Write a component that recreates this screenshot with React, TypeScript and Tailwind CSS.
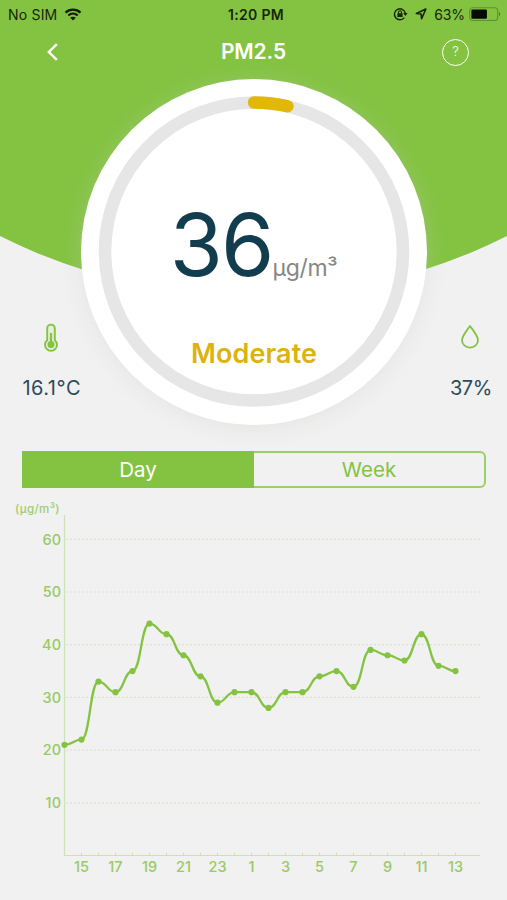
const readings = [
  21, 22, 33, 31, 35, 44, 42, 38, 34, 29, 31, 31,
  28, 31, 31, 34, 35, 32, 39, 38, 37, 42, 36, 35,
];

const hourLabels = ["15", "17", "19", "21", "23", "1", "3", "5", "7", "9", "11", "13"];
const gridValues = [60, 50, 40, 30, 20, 10];

const axisX = 64.5;
const axisY = 359.5;
const stepX = 17;
const unitY = 5.27;

const pointX = (i: number) => axisX + i * stepX;
const pointY = (value: number) => axisY - value * unitY;

const linePath = readings
  .map((value, i) => {
    const x = pointX(i);
    const y = pointY(value);
    if (i === 0) return `M${x} ${y}`;
    const mid = x - stepX / 2;
    return `C${mid} ${pointY(readings[i - 1])} ${mid} ${y} ${x} ${y}`;
  })
  .join(" ");

const StatusBar = () => (
  <div className="grid h-7 grid-cols-3 items-center pl-2 pr-1.5 text-[14px] text-[#16260a]">
    <div className="flex items-center gap-[7px]">
      <span className="tracking-[0.2px]">No SIM</span>
      <svg width="18" height="13" viewBox="0 0 17 13" fill="none" stroke="#101c06" strokeWidth="2.2">
        <path d="M1 4.6C5.2.6 11.8.6 16 4.6" />
        <path d="M3.8 7.5c2.7-2.4 6.7-2.4 9.4 0" />
        <path d="M8.5 12.4 5.7 9.7c1.6-1.4 4-1.4 5.6 0z" fill="#101c06" stroke="none" />
      </svg>
    </div>
    <div className="pl-[3px] text-center font-semibold tracking-[0.3px]">1:20 PM</div>
    <div className="flex items-center justify-end">
      <svg width="15" height="14" viewBox="0 0 15 14" fill="none" stroke="#16260a" strokeWidth="1.4">
        <path d="M11.3 10.6A5.5 5.5 0 1 1 12.3 6" />
        <path d="M10.2 6h4.4l-2.2 3z" fill="#16260a" stroke="none" />
        <rect x="4.4" y="6.2" width="5.2" height="3.9" rx=".5" fill="#16260a" stroke="none" />
        <path d="M5.5 6.4V5.2a1.5 1.5 0 0 1 3 0v1.2" strokeWidth="1.1" />
      </svg>
      <svg className="ml-[7px]" width="12" height="12" viewBox="0 0 12 12" fill="none" stroke="#16260a" strokeWidth="1.6" strokeLinejoin="round">
        <path d="M10.8 1.1 1.3 5.5l4.8.5.5 4.8z" />
      </svg>
      <span className="ml-[7px] tracking-[-0.1px]">63%</span>
      <svg className="ml-[4px]" width="32" height="15" viewBox="0 0 32 15">
        <rect x=".7" y=".7" width="28" height="12.8" rx="3" fill="none" stroke="#5f9030" strokeWidth="1.1" />
        <rect x="2.4" y="2.5" width="15.5" height="9.2" rx="1" fill="#050a02" />
        <path d="M30 5v4.2c1.6-.6 1.6-3.6 0-4.2z" fill="#4f7a25" />
      </svg>
    </div>
  </div>
);

const NavBar = () => (
  <div className="grid h-[51px] grid-cols-[1fr_auto_1fr] items-center pl-[46px] pr-[38px] pb-[3px] text-white">
    <svg width="28" height="20" viewBox="0 0 28 20" fill="none" stroke="white" strokeWidth="2.4">
      <path d="M10.8 2.2 2.8 10l8 7.8" />
    </svg>
    <h1 className="-ml-2 text-[21px] font-semibold tracking-[-0.1px]">PM2.5</h1>
    <div className="flex size-[27px] items-center justify-center justify-self-end rounded-full border-[1.5px] border-white text-[13px] font-light">
      ?
    </div>
  </div>
);

const Gauge = () => (
  <div className="relative size-[346px] shrink-0 rounded-full bg-white shadow-[0_3px_22px_rgba(200,205,197,0.33)]">
    <svg className="absolute inset-0" width="346" height="346" viewBox="0 0 346 346" fill="none">
      <circle cx="173" cy="172.5" r="149" stroke="#e6e6e6" strokeWidth="12.6" />
      <path d="M173 23.5A149 149 0 0 1 206.5 27.3" stroke="#e2b808" strokeWidth="12.4" strokeLinecap="round" />
    </svg>
    <div className="relative flex flex-col items-center pt-[123px]">
      <div className="mr-px flex items-baseline">
        <span className="text-[86px] leading-[86px] tracking-[-1.8px] text-[#123d4e]">36</span>
        <span className="text-[23px] tracking-[-0.3px] text-[#868686]">µg/m³</span>
      </div>
      <div className="mt-[50px] text-[27px] font-semibold leading-8 tracking-[0.1px] text-[#dcb30d]">Moderate</div>
    </div>
  </div>
);

const Summary = () => (
  <div className="flex h-[346px] text-[20px] text-[#2b4c5b]">
    <div className="flex w-[81px] flex-col items-end pt-[244px]">
      <svg className="mr-[22px]" width="16" height="30" viewBox="0 0 16 30" fill="none" stroke="#83c341">
        <path d="M4.2 17.2V5.4a3.8 3.8 0 0 1 7.6 0v11.8a6 6 0 1 1-7.6 0z" fill="#e4efd8" strokeWidth="1.9" />
        <path d="M8 10v12" strokeWidth="2.2" />
        <circle cx="8" cy="21.6" r="3.5" fill="#83c341" stroke="none" />
      </svg>
      <span className="mt-[21px] whitespace-nowrap leading-7 tracking-[0.5px]">16.1°C</span>
    </div>
    <Gauge />
    <div className="flex w-[80px] flex-col items-end pr-[15px] pt-[244px]">
      <svg className="mr-[12px]" width="20" height="30" viewBox="0 0 20 30" fill="none" stroke="#83c341" strokeWidth="1.8" strokeLinejoin="round">
        <path d="M10 3C7 7.4 2 12.8 2 17.2a8 7.4 0 0 0 16 0C18 12.8 13 7.4 10 3z" />
      </svg>
      <span className="mt-[21px] leading-7 tracking-[-0.4px]">37%</span>
    </div>
  </div>
);

const PeriodTabs = () => (
  <div className="ml-[22px] mr-[21px] mt-[26px] grid h-[37px] grid-cols-2 text-[20.5px]">
    <button className="bg-[#83c341] pt-px text-white">Day</button>
    <button className="rounded-r-[6px] border-2 border-l-0 border-[#9bd069] pt-px text-[#83c341]">Week</button>
  </div>
);

const Chart = () => (
  <svg className="mt-2 block" width="507" height="404" viewBox="0 0 507 404" fill="none">
    <text x="15" y="16.5" fontSize="11.5" letterSpacing="0.4" fontWeight="500" fill="#9ccd6c">(µg/m³)</text>
    {gridValues.map((value) => (
      <g key={value}>
        <path d={`M66 ${pointY(value)}H480`} stroke="#dbe1d2" strokeWidth="1.2" strokeDasharray="2 2" />
        <text x="61" y={pointY(value) + 5.3} textAnchor="end" fontSize="14.5" fontWeight="500" fill="#97cb64">
          {value}
        </text>
      </g>
    ))}
    <path d={`M${axisX} 19V${axisY}H480`} stroke="#cfe0b4" strokeWidth="1.2" />
    {readings.map((_, i) => (
      <path key={i} d={`M${pointX(i)} ${axisY}v-3`} stroke="#cfe0b4" />
    ))}
    {hourLabels.map((label, i) => (
      <text key={label} x={pointX(i * 2 + 1)} y="376.3" textAnchor="middle" fontSize="14.5" fontWeight="500" fill="#97cb64">
        {label}
      </text>
    ))}
    <path d={linePath} stroke="#83c341" strokeWidth="2.3" />
    {readings.map((value, i) => (
      <circle key={i} cx={pointX(i)} cy={pointY(value)} r="3.1" fill="#83c341" />
    ))}
  </svg>
);

export default function App() {
  return (
    <main className="relative h-[900px] w-[507px] overflow-hidden bg-[#f1f1f1] font-[Inter,'Liberation_Sans',sans-serif]">
      <div className="absolute inset-0 bg-[#83c341] [clip-path:circle(566px_at_253.5px_-270px)]" />
      <div className="relative">
        <StatusBar />
        <NavBar />
        <Summary />
        <PeriodTabs />
        <Chart />
      </div>
    </main>
  );
}
